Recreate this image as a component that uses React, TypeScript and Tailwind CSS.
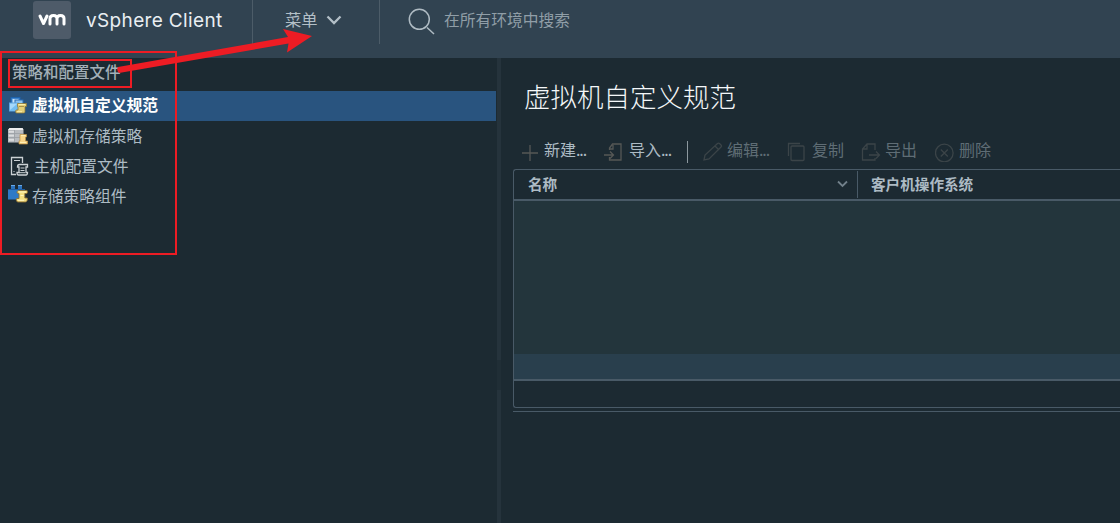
import type { ReactNode } from "react";

function VmIcon() {
  return (
    <svg width="20" height="18" viewBox="0 0 20 18">
      <rect x="3" y=".5" width="9" height="8" fill="#3f86cf" stroke="#1e63ad" />
      <rect x="4.500" y="2" width="6" height="5" fill="#c5e2f8" />
      <rect x="7" y="3" width="8" height="7" fill="#8cc3f0" stroke="#2a6db5" />
      <rect x="1.500" y="6" width="9" height="8" fill="#a5d8fb" stroke="#5fa6e0" />
      <path d="M2 13L9 7h1v7H2z" fill="#72bdf2" />
      <path d="M9.500 6.500h9v3h-1.500v5c0 1-.500 1.500-1.500 1.500H8.500C7.500 16 7.500 14 8 13h2V9.500h-.5z" fill="#e3cf78" stroke="#8f7a38" strokeWidth=".8" />
      <path d="M10.500 7.500H17M9 14.700h5" stroke="#fff3b0" strokeWidth=".9" />
      <path d="M11 9.500h5" stroke="#a08845" strokeWidth=".9" />
    </svg>
  );
}

function StorageIcon() {
  return (
    <svg width="20" height="18" viewBox="0 0 20 18">
      <path d="M1.500 1h13l1 2v12.500H0V3z" fill="#b9bcc0" />
      <path d="M1.500 1h13l1 2H0z" fill="#eeeeee" />
      <path d="M0 6.500h15M0 10.500h15M6.500 3v12" stroke="#9a9fa5" strokeWidth=".8" />
      <path d="M1 4.800h5M1 8.600h5M1 12.800h5" stroke="#dcdddf" strokeWidth="1.800" />
      <path d="M12 7.500h6.500v2.500h-1v4h2v3H11v-3h1z" fill="#f8d588" stroke="#c29445" strokeWidth=".7" />
      <path d="M13 8.600h4.500M12 15.500h6" stroke="#fff0b5" />
    </svg>
  );
}

function HostIcon() {
  return (
    <svg width="20" height="20" viewBox="0 0 20 20" fill="none" stroke="#cbd1d4">
      <path d="M7 18.500H2.500v-17h11V7" strokeWidth="1.300" />
      <path d="M5 4.500h6M4.500 15.500h1" />
      <path d="M10.500 8.500h8v2.500h-1.500v5.500h1.500c0 1.500-.500 2.500-1.500 2.500H9.500c-1 0-1.500-1-1.500-2.500h2V11H8.500c0-1.500.5-2.500 2-2.500z" strokeWidth="1.300" />
      <path d="M11.500 12h4M11.500 14.500h4M10 16.700h6" />
    </svg>
  );
}

function ComponentIcon() {
  return (
    <svg width="21" height="22" viewBox="0 0 21 22" className="-mt-1">
      <path d="M0 6h17v10.500H0z" fill="#2f7ac6" />
      <path d="M0 6.500h17" stroke="#1e5b9e" />
      <path d="M3 2h4v4H3zM10 2h4v4h-4z" fill="#2b72bd" />
      <path d="M3 2.500h4M10 2.500h4" stroke="#67a8e6" />
      <path d="M10.500 7.500h8.500c.6 0 .6 3-.2 3h-2V15h2.500c.3 2.500-.5 4-2 4H10c-1.500 0-2-2-1.500-3.500h2.500V10.500L9 10c0-1.500.5-2.500 1.500-2.500z" fill="#f3df80" stroke="#8f7132" strokeWidth=".9" />
      <path d="M11 9h7M12.500 12.500h3M10 17.300h6" stroke="#fff7c0" />
    </svg>
  );
}

function NavItem({ icon, children, active = false, inset = false }: { icon: ReactNode; children: ReactNode; active?: boolean; inset?: boolean }) {
  return (
    <li className={`flex h-[30px] w-[496px] items-center ${inset ? "pl-[9px]" : "pl-2"} ${active ? "bg-[#29547f] font-bold text-white" : "text-[#adbbc4]"}`}>
      <span className="flex w-6 shrink-0 items-center">{icon}</span>
      <span className={`whitespace-nowrap text-[15.75px] ${active ? "pb-0.5 leading-[28px]" : "leading-[30px]"} ${inset ? "pl-px" : ""}`}>{children}</span>
    </li>
  );
}

function Tool({ icon, label, more = false, layout, dim = false }: { icon: ReactNode; label: string; more?: boolean; layout: string; dim?: boolean }) {
  return (
    <button className={`flex h-[30px] shrink-0 items-start ${layout} ${dim ? "text-[#5f6d75]" : "text-[#adbbc4]"}`}>
      <svg width="20" height="20" viewBox="0 0 20 20" fill="none" stroke={dim ? "#3b4448" : "#565856"} strokeWidth="1.300" className="mt-[6px] shrink-0">
        {icon}
      </svg>
      <span className="whitespace-nowrap text-[16px] leading-[27px]">
        {label}
        {more && <span className="tracking-[-1.1px]">...</span>}
      </span>
    </button>
  );
}

function Annotations() {
  return (
    <svg className="pointer-events-none absolute left-0 top-0" width="330" height="260" fill="none" stroke="#ed1c24" strokeWidth="2">
      <rect x="1" y="52" width="175" height="202" />
      <rect x="9" y="60" width="122" height="27" />
      <path d="M118 67L288 37 283 29 312 36 287 52.500 288.500 43.500 119 73Q116 70 118 67z" fill="#ed1c24" stroke="none" />
    </svg>
  );
}

export default function App() {
  return (
    <div className="relative flex h-[523px] w-[1120px] flex-col overflow-hidden bg-[#1c2a32] font-['Noto_Sans_CJK_SC',sans-serif]">
      <header className="flex h-[58px] shrink-0 items-start bg-[#314351]">
        <div className="flex h-11 w-[253px] items-start border-r border-[#4c5c68] pl-[33px]">
          <div className="mt-px flex h-[38px] w-[38px] items-center justify-center rounded-[3px] bg-[#4e5b69]">
            <svg width="28" height="14" viewBox="0 0 28 14" fill="none" stroke="#fff" strokeWidth="3" strokeLinecap="round" strokeLinejoin="round">
              <path d="M2 3l3.500 7.500L9 3M12 11V5.500q0-3 3.500-3t3.500 3V11M19 5.500q0-3 3.500-3t3.500 3V11" />
            </svg>
          </div>
          <span className="ml-[15px] whitespace-nowrap font-['Inter',sans-serif] text-[19px] leading-[42px] tracking-[0.35px] text-[#e9eef2]">vSphere Client</span>
        </div>
        <div className="flex h-11 w-[127px] items-start border-r border-[#4c5c68] pl-8">
          <span className="text-[16.300px] leading-[38px] text-[#b3bfc7]">菜单</span>
          <svg className="ml-[8px] mt-[14px]" width="16" height="12" fill="none" stroke="#b3bfc7" strokeWidth="2.300">
            <path d="M1.500 2.500L8 9l6.500-6.500" />
          </svg>
        </div>
        <div className="flex h-11 items-start pl-7">
          <svg className="mt-2" width="28" height="28" fill="none" stroke="#afbbc3" strokeWidth="1.500">
            <circle cx="11.300" cy="11.300" r="10" />
            <path d="M19 19.500l7 6.500" />
          </svg>
          <span className="ml-2 text-[15.75px] leading-[40px] text-[#909ea7]">在所有环境中搜索</span>
        </div>
      </header>
      <div className="flex min-h-0 flex-1">
        <nav className="w-[497px] shrink-0">
          <h2 className="h-[33px] pl-3 text-[15.500px] font-medium leading-[27px] text-[#a3b0b8]">策略和配置文件</h2>
          <ul>
            <NavItem icon={<VmIcon />} active>虚拟机自定义规范</NavItem>
            <NavItem icon={<StorageIcon />}>虚拟机存储策略</NavItem>
            <NavItem icon={<HostIcon />} inset>主机配置文件</NavItem>
            <NavItem icon={<ComponentIcon />}>存储策略组件</NavItem>
          </ul>
        </nav>
        <div className="flex w-1 shrink-0 flex-col bg-[#25333c] pt-[302px]">
          <div className="h-[30px] bg-[#202e36]" />
        </div>
        <main className="min-w-0 flex-1 pl-3">
          <h1 className="h-[78px] pl-[11px] pt-[19px] text-[26.500px] font-light leading-[38px] text-[#f4f7f9]">虚拟机自定义规范</h1>
          <div className="flex h-[33px] items-start pl-2">
            <Tool icon={<path d="M1 11h16M9 3v16" />} label="新建" more layout="w-[83px] gap-[3px]" />
            <Tool icon={<><path d="M5.500 8V6l3-4H17v16H5.500v-3M6 7h3V3" /><path d="M0 13h9M6 9.500l3.500 3.500L6 16.500" /></>} label="导入" more layout="w-[83px] gap-[5px]" />
            <div className="mt-[5px] h-[22px] w-px bg-[#8c989e]" />
            <Tool icon={<path d="M1 18l1-5L14.500 1.500q1-.8 2 0l1.500 1.500q1 1 0 2L6 17l-5 1zM12 4l4 4" />} label="编辑" more layout="ml-[15px] w-[84px] gap-[4px]" dim />
            <Tool icon={<><rect x="4" y="4" width="13" height="14.500" rx="1" /><path d="M1.500 14V1.500H13" /></>} label="复制" layout="w-[74px] gap-[5px]" dim />
            <Tool icon={<path d="M14 8V2H6L1.500 7v11H14v-2M2 7h4V2M8 13h10M15 9.500l3.500 3.500-3.500 3.500" />} label="导出" layout="w-[74px] gap-[4px]" dim />
            <Tool icon={<><circle cx="9.300" cy="11" r="8.800" /><path d="M5.800 7.500l7 7M12.800 7.500l-7 7" /></>} label="删除" layout="w-[60px] gap-[4px]" dim />
          </div>
          <section className="h-[239px] overflow-hidden rounded-l-[3px] border-y border-l border-[#495a67]">
            <div className="flex h-[31px] items-start border-b-2 border-[#495a67] pt-px text-[14.600px] font-bold leading-[26px] text-[#adbbc4]">
              <div className="flex h-[27px] w-[344px] items-start justify-between border-r border-[#495a67] pl-[14px] pr-[9px]">
                <span>名称</span>
                <svg className="mt-[9px]" width="11" height="8" fill="none" stroke="#71808a" strokeWidth="1.800"><path d="M1 1.500l4.500 4.500L10 1.500" /></svg>
              </div>
              <span className="pl-[13px]">客户机操作系统</span>
            </div>
            <div className="h-[153px] bg-[#23353c]" />
            <div className="h-[27px] border-b-2 border-[#495a67] bg-[#293f4d]" />
          </section>
          <div className="mt-[3px] h-px bg-[#495a67]" />
        </main>
      </div>
      <Annotations />
    </div>
  );
}
